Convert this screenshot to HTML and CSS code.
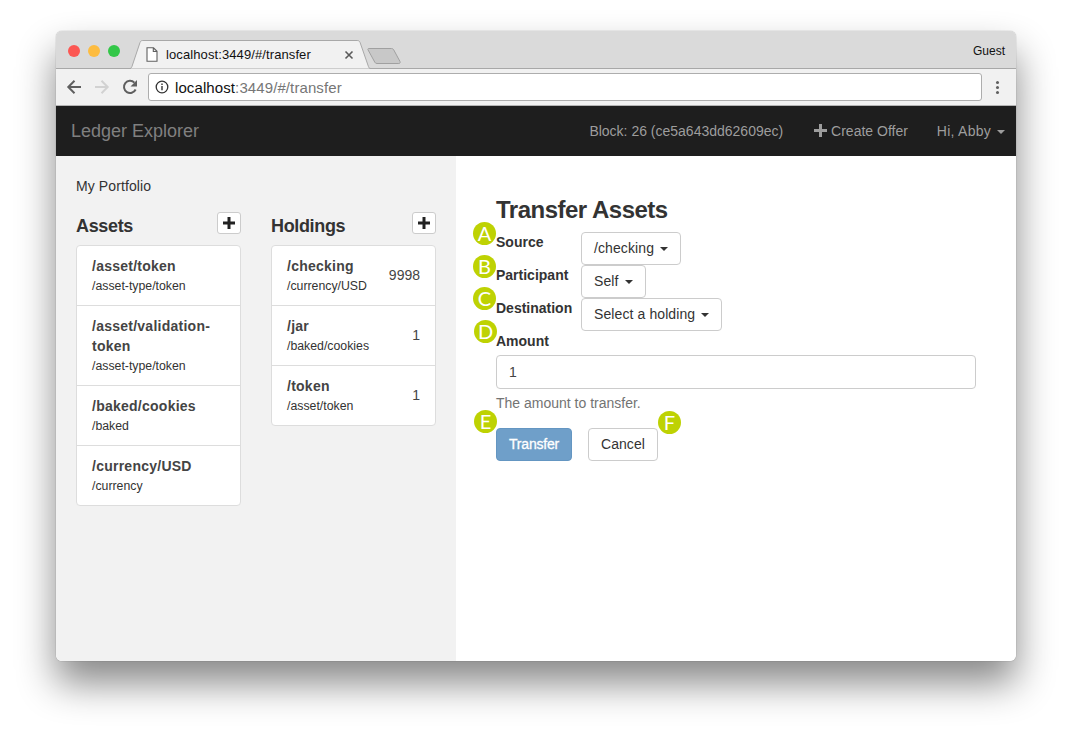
FILE: index.html
```html
<!doctype html>
<html>
<head>
  <meta charset="utf8">
  <title>Ledger Explorer</title>
  <link rel="stylesheet" href="styles.css">
</head>
<body>
  <div class="window">
    <!-- browser tabs -->
    <div class="tabstrip">
      <div class="lights">
        <span class="light red"></span>
        <span class="light yellow"></span>
        <span class="light green"></span>
      </div>
      <div class="tab">
        <svg class="tab-shape" width="245" height="31" viewBox="0 0 245 31">
          <path d="M0 29.500h1.500c1.200 0 1.900-.5 2.400-1.800L12 3.500c.5-1.400 1.300-2 2.800-2h214.400c1.500 0 2.300.6 2.900 2l8.400 24.200c.5 1.300 1.200 1.800 2.400 1.800h2" fill="#f1f1f1" stroke="#a8a8a8"/>
        </svg>
        <svg class="tab-page" width="12" height="15" viewBox="0 0 12 15">
          <path d="M1 .8h6.500L11 4.300v9.900H1zM7.300 .8v3.700H11" fill="#fff" stroke="#5f5f5f" stroke-width="1.100"/>
        </svg>
        <span class="tab-title">localhost:3449/#/transfer</span>
        <svg class="tab-close" width="10" height="10" viewBox="0 0 10 10">
          <path d="M1.500 1.500l7 7M8.500 1.500l-7 7" stroke="#5a5a5a" stroke-width="1.600"/>
        </svg>
      </div>
      <svg class="newtab" width="35" height="18" viewBox="0 0 35 18">
        <path d="M2 1.500h22.500c1 0 1.700.4 2.200 1.300l6.300 11.700c.5 1 .1 2-1.200 2H10c-1 0-1.700-.4-2.200-1.300L1 2.800C.6 2 1 1.500 2 1.500z" fill="#c8c8c8" stroke="#a0a0a0"/>
      </svg>
      <span class="guest">Guest</span>
    </div>

    <!-- address bar -->
    <div class="toolbar">
      <svg class="tool-icon" width="16" height="16" viewBox="0 0 16 16">
        <path d="M15 8H2.500M8.500 1.800L2.300 8l6.200 6.200" fill="none" stroke="#5f5f5f" stroke-width="2"/>
      </svg>
      <svg class="tool-icon" width="16" height="16" viewBox="0 0 16 16">
        <path d="M1 8h12.500M7.500 1.800L13.700 8l-6.200 6.200" fill="none" stroke="#d2d2d2" stroke-width="2"/>
      </svg>
      <svg class="tool-icon" width="16" height="16" viewBox="0 0 16 16">
        <path d="M13.600 10.500A6.100 6.100 0 1 1 12.400 3.600" fill="none" stroke="#5f5f5f" stroke-width="2"/>
        <path d="M15 1v6.500H8.500z" fill="#5f5f5f"/>
      </svg>
      <div class="urlbox">
        <svg width="14" height="14" viewBox="0 0 14 14">
          <circle cx="7" cy="7" r="5.800" fill="none" stroke="#333" stroke-width="1.300"/>
          <path d="M6.300 6h1.400v4.300H6.300zM6.300 3.500h1.400v1.400H6.300z" fill="#333"/>
        </svg>
        <span class="url-host">localhost</span><span class="url-rest">:3449/#/transfer</span>
      </div>
      <div class="menu-dots"><span></span><span></span><span></span></div>
    </div>

    <!-- app navbar -->
    <nav class="navbar">
      <span class="brand">Ledger Explorer</span>
      <div class="nav-right">
        <span>Block: 26 (ce5a643dd62609ec)</span>
        <span class="nav-offer">
          <svg width="13" height="13" viewBox="0 0 13 13"><path d="M5 0h3v5h5v3H8v5H5V8H0V5h5z" fill="#9d9d9d"/></svg>
          Create Offer
        </span>
        <span class="nav-user">Hi, Abby<i class="caret nav-caret"></i></span>
      </div>
    </nav>

    <div class="main">
      <aside class="sidebar">
        <div class="portfolio">My Portfolio</div>
        <div class="columns">
          <section class="column">
            <div class="column-head">
              <h3>Assets</h3>
              <button class="add-btn"><svg width="12" height="12" viewBox="0 0 12 12"><path d="M4.500 0h3v4.500H12v3H7.500V12h-3V7.500H0v-3h4.500z" fill="#222"/></svg></button>
            </div>
            <div class="list">
              <div class="item"><div class="item-text"><b>/asset/token</b><small>/asset-type/token</small></div></div>
              <div class="item"><div class="item-text"><b>/asset/validation-token</b><small>/asset-type/token</small></div></div>
              <div class="item"><div class="item-text"><b>/baked/cookies</b><small>/baked</small></div></div>
              <div class="item"><div class="item-text"><b>/currency/USD</b><small>/currency</small></div></div>
            </div>
          </section>
          <section class="column">
            <div class="column-head">
              <h3>Holdings</h3>
              <button class="add-btn"><svg width="12" height="12" viewBox="0 0 12 12"><path d="M4.500 0h3v4.500H12v3H7.500V12h-3V7.500H0v-3h4.500z" fill="#222"/></svg></button>
            </div>
            <div class="list">
              <div class="item"><div class="item-text"><b>/checking</b><small>/currency/USD</small></div><span class="qty">9998</span></div>
              <div class="item"><div class="item-text"><b>/jar</b><small>/baked/cookies</small></div><span class="qty">1</span></div>
              <div class="item"><div class="item-text"><b>/token</b><small>/asset/token</small></div><span class="qty">1</span></div>
            </div>
          </section>
        </div>
      </aside>

      <main class="content">
        <h2>Transfer Assets</h2>
        <div class="field">
          <label>Source</label>
          <button class="btn">/checking<i class="caret"></i></button>
          <span class="marker marker-a">A</span>
        </div>
        <div class="field">
          <label>Participant</label>
          <button class="btn">Self<i class="caret"></i></button>
          <span class="marker marker-b">B</span>
        </div>
        <div class="field">
          <label>Destination</label>
          <button class="btn">Select a holding<i class="caret"></i></button>
          <span class="marker marker-c">C</span>
        </div>
        <div class="amount">
          <label>Amount</label>
          <span class="marker marker-d">D</span>
          <input class="amount-input" type="text" value="1">
          <p class="help">The amount to transfer.</p>
        </div>
        <div class="actions">
          <button class="btn btn-primary">Transfer</button>
          <button class="btn">Cancel</button>
          <span class="marker marker-e">E</span>
          <span class="marker marker-f">F</span>
        </div>
      </main>
    </div>
  </div>
</body>
</html>
```

FILE: styles.css
```css
html, body {
  margin: 0px;
  padding: 0px;
  height: 100%;
  overflow: hidden;
  background: #fff;
}
body {
  padding: 31px 56px 0;
  box-sizing: border-box;
  font-family: "Liberation Sans", Arial, sans-serif;
  font-size: 14px;
  color: #333;
}
.window {
  width: 960px;
  height: 630px;
  display: flex;
  flex-direction: column;
  border-radius: 6px;
  overflow: hidden;
  box-shadow: 0 0 1px rgba(0,0,0,.5), 0 22px 38px rgba(0,0,0,.47);
}

/* browser chrome */
.tabstrip {
  position: relative;
  height: 37px;
  flex: none;
  display: flex;
  align-items: center;
  background: #dadada;
  border-bottom: 1px solid #a8a8a8;
}
.lights {
  display: flex;
  gap: 8px;
  margin: 3px 0 0 12px;
}
.light {
  width: 12px;
  height: 12px;
  border-radius: 50%;
}
.red { background: #fc5753; }
.yellow { background: #fdbc40; }
.green { background: #33c748; }
.tab {
  position: absolute;
  left: 72px;
  top: 8px;
  width: 245px;
  height: 30px;
}
.tab-shape {
  position: absolute;
  left: 0;
  top: 0;
}
.tab-page {
  position: absolute;
  left: 18px;
  top: 8px;
}
.tab-title {
  position: absolute;
  left: 38px;
  top: 8px;
  font-size: 13px;
  letter-spacing: .1px;
  line-height: 15px;
  color: #111;
}
.tab-close {
  position: absolute;
  left: 216px;
  top: 11px;
}
.newtab {
  position: absolute;
  left: 311px;
  top: 16px;
}
.guest {
  margin: 3px 11px 0 auto;
  font-size: 12px;
  color: #111;
}
.toolbar {
  height: 36px;
  flex: none;
  display: flex;
  align-items: center;
  background: #f1f1f1;
  border-bottom: 1px solid #b4b4b4;
}
.tool-icon {
  flex: none;
  margin-left: 10px;
  margin-right: 2px;
}
.urlbox {
  width: 834px;
  height: 28px;
  margin-left: 8px;
  flex: none;
  box-sizing: border-box;
  display: flex;
  align-items: center;
  padding-left: 6px;
  background: #fff;
  border: 1px solid #adadad;
  border-radius: 3px;
  font-size: 15px;
  letter-spacing: .1px;
}
.urlbox svg {
  margin-right: 6px;
}
.url-host { color: #111; }
.url-rest { color: #767676; }
.menu-dots {
  display: flex;
  flex-direction: column;
  gap: 2px;
  margin-left: 14px;
}
.menu-dots span {
  width: 3px;
  height: 3px;
  border-radius: 50%;
  background: #5f5f5f;
}

/* app navbar */
.navbar {
  height: 50px;
  flex: none;
  display: flex;
  align-items: center;
  justify-content: space-between;
  padding: 0 11px 0 15px;
  background: #1e1e1e;
  color: #9d9d9d;
}
.brand {
  font-size: 18px;
  color: #808080;
}
.nav-right {
  display: flex;
  align-items: center;
  gap: 30px;
}
.nav-offer {
  margin: 0 -1px 0 1px;
}
.nav-offer svg {
  vertical-align: -1px;
}
.nav-user {
  letter-spacing: .25px;
}
.caret {
  display: inline-block;
  margin-left: 6px;
  vertical-align: middle;
  border-top: 4px solid #333;
  border-left: 4px solid transparent;
  border-right: 4px solid transparent;
}
.nav-caret {
  border-top-color: #9d9d9d;
}

/* layout */
.main {
  flex: 1;
  display: flex;
  min-height: 0;
  background: #fff;
}
.sidebar {
  width: 400px;
  flex: none;
  box-sizing: border-box;
  padding: 20px;
  background: #f2f2f2;
}
.portfolio {
  line-height: 20px;
  letter-spacing: .1px;
}
.columns {
  display: flex;
  gap: 30px;
  margin-top: 16px;
}
.column {
  width: 165px;
}
.column-head {
  height: 33px;
  display: flex;
  justify-content: space-between;
  align-items: flex-start;
}
.column-head h3 {
  margin: 4px 0 0;
  font-size: 18px;
  line-height: 20px;
  font-weight: bold;
  letter-spacing: -.35px;
  color: #333;
}
.add-btn {
  width: 24px;
  height: 22px;
  padding: 0;
  display: flex;
  align-items: center;
  justify-content: center;
  background: #fff;
  border: 1px solid #ccc;
  border-radius: 3px;
}
.list {
  background: #fff;
  border: 1px solid #ddd;
  border-radius: 4px;
}
.item {
  display: flex;
  align-items: center;
  justify-content: space-between;
  padding: 10px 15px 9px;
  border-top: 1px solid #ddd;
}
.item:first-child {
  border-top: 0;
}
.item-text b {
  display: block;
  line-height: 20px;
  letter-spacing: .25px;
  color: #444;
}
.item-text small {
  display: block;
  margin-top: 1px;
  font-size: 12.3px;
  line-height: 19px;
}
.qty {
  margin-bottom: 2px;
  color: #444;
}

/* transfer form */
.content {
  flex: 1;
  padding: 40px 40px 0;
}
.content h2 {
  margin: 0 0 8px;
  font-size: 24px;
  line-height: 28px;
  font-weight: bold;
  letter-spacing: -.5px;
}
.field {
  position: relative;
  display: flex;
  align-items: flex-start;
  height: 33px;
}
.field label, .amount label {
  display: block;
  font-weight: bold;
  line-height: 20px;
}
.field label {
  width: 85px;
}
.btn {
  height: 33px;
  padding: 0 12px 2px;
  background: #fff;
  border: 1px solid #ccc;
  border-radius: 4px;
  font-family: inherit;
  font-size: 14px;
  color: #333;
  white-space: nowrap;
}
.field .btn {
  letter-spacing: .1px;
}
.amount {
  position: relative;
}
.amount-input {
  display: block;
  width: 480px;
  height: 34px;
  box-sizing: border-box;
  margin-top: 4px;
  padding: 0 12px;
  border: 1px solid #ccc;
  border-radius: 4px;
  font-family: inherit;
  font-size: 14px;
  color: #444;
}
.help {
  margin: 4px 0 0;
  line-height: 20px;
  color: #737373;
}
.actions {
  position: relative;
  display: flex;
  gap: 16px;
  margin-top: 15px;
}
.actions .btn {
  letter-spacing: .05px;
}
.actions .btn-primary {
  background: #6f9fc9;
  border-color: #6496c2;
  color: #fff;
  letter-spacing: -.2px;
  -webkit-text-stroke: .3px #fff;
}

/* callouts */
.marker {
  position: absolute;
  width: 23px;
  height: 23px;
  border-radius: 50%;
  background: #bed203;
  color: #fff;
  font-family: Lato, "Liberation Sans", sans-serif;
  font-size: 20px;
  font-weight: 400;
  line-height: 23px;
  text-align: center;
}
.marker-a { left: -23px; top: -10px; }
.marker-b { left: -23px; top: -10px; }
.marker-c { left: -23px; top: -11px; }
.marker-d { left: -22px; top: -11px; }
.marker-e { left: -22px; top: -18px; }
.marker-f { left: 162px; top: -17px; }
```
